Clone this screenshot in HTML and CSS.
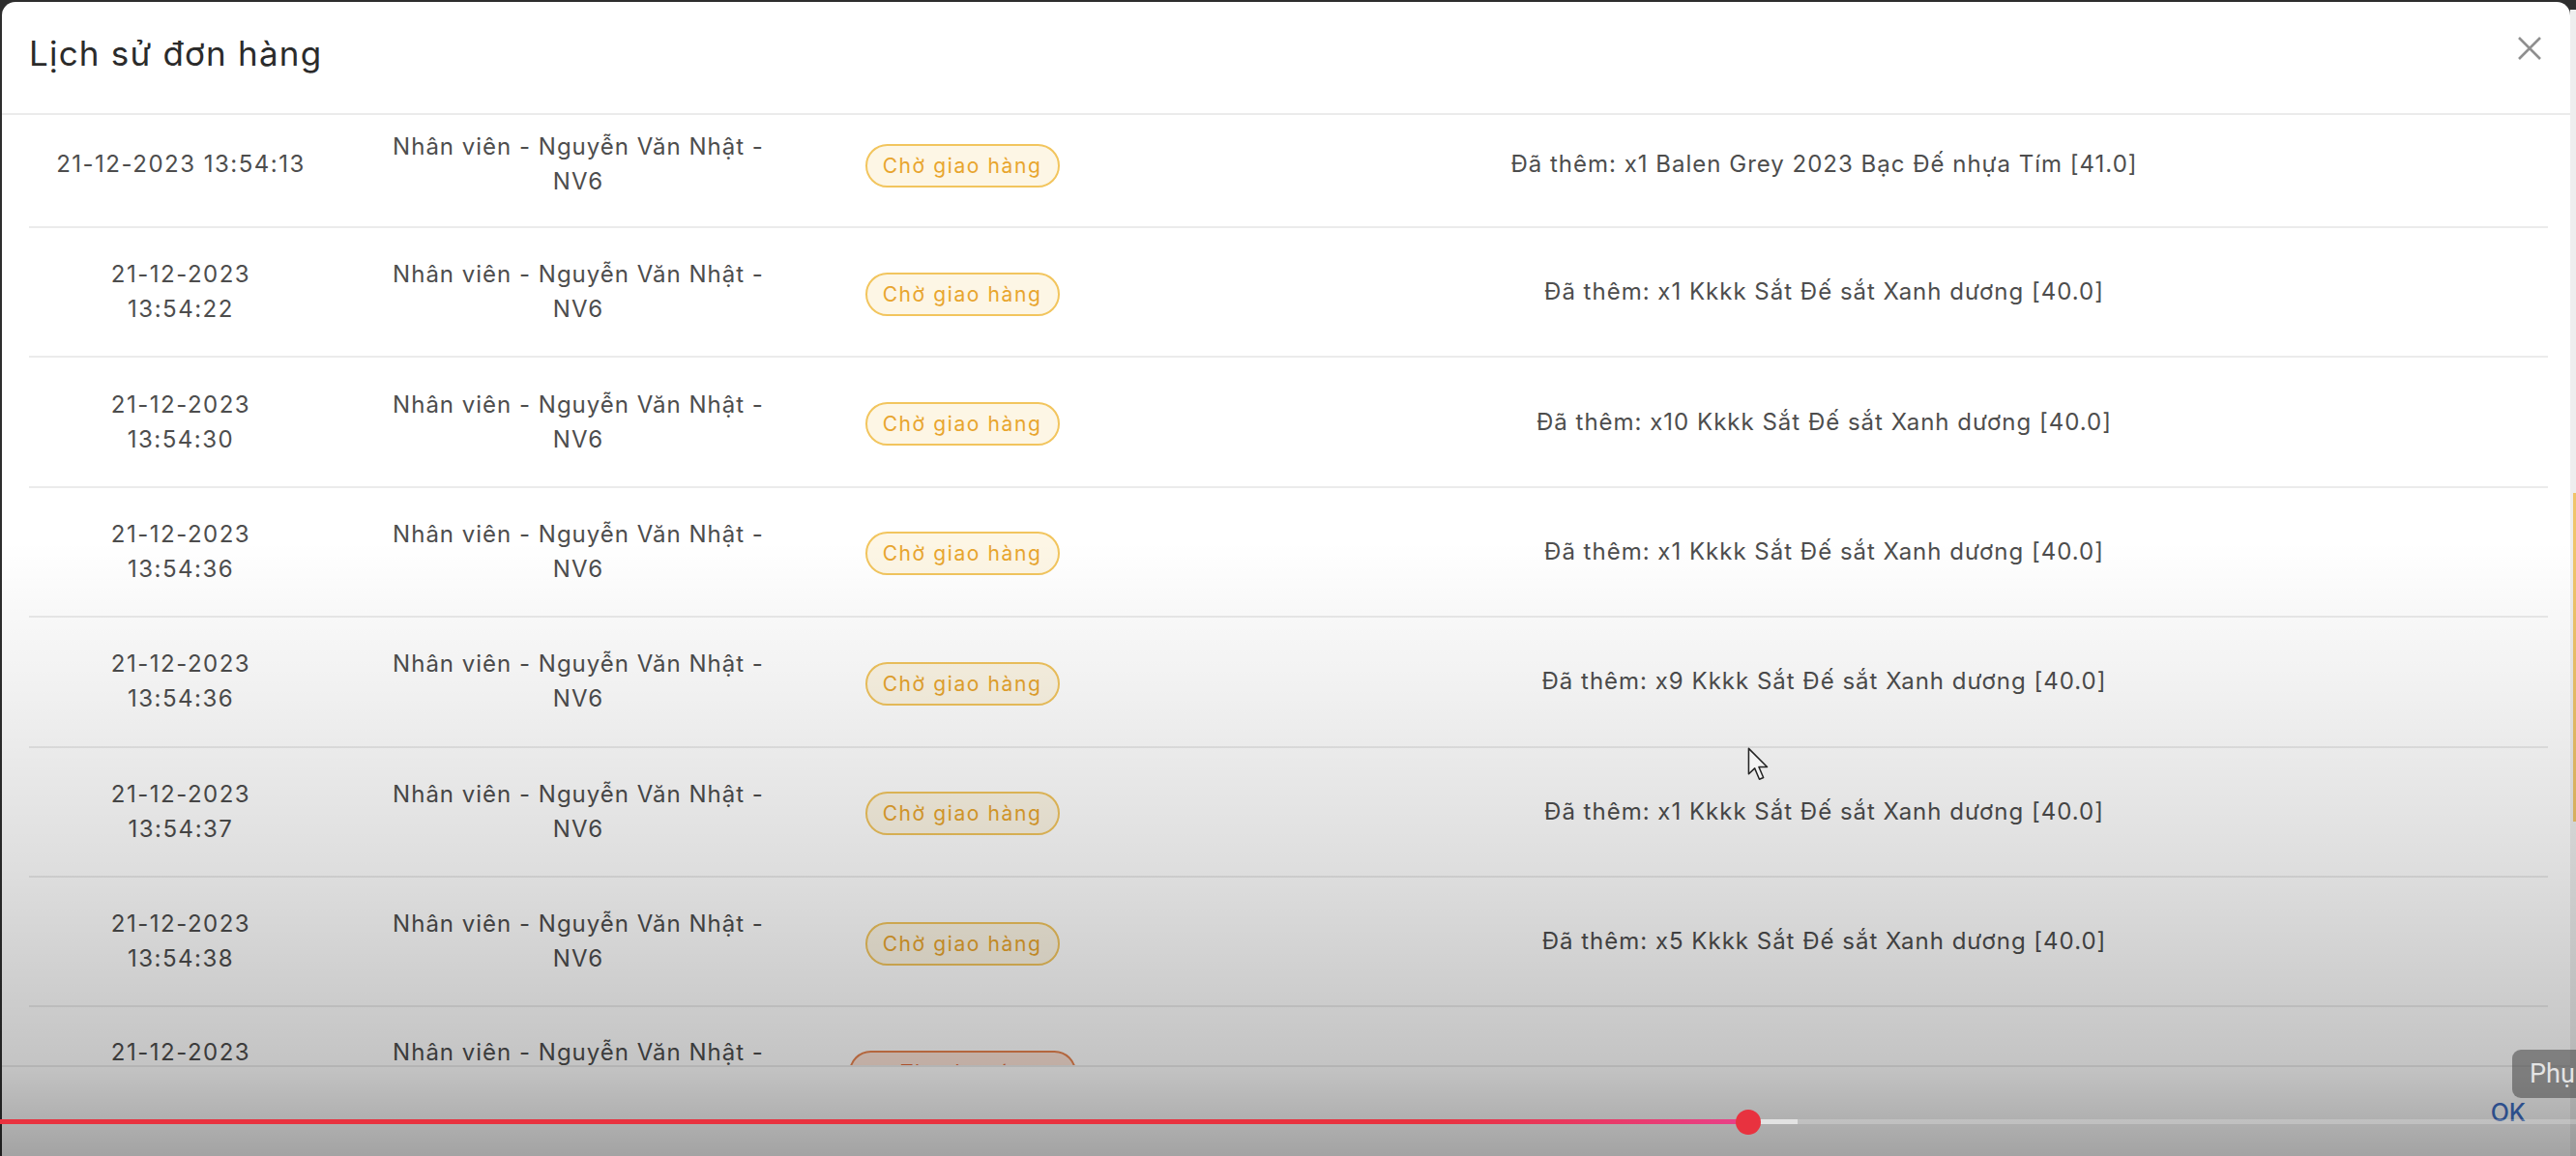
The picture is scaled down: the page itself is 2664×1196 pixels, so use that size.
FILE: index.html
```html
<!DOCTYPE html>
<html lang="vi">
<head>
<meta charset="utf-8">
<title>Lịch sử đơn hàng</title>
<link rel="stylesheet" href="styles.css">
</head>
<body>
<div class="edge-left"></div>
<div class="modal">
  <div class="modal-header">
    <div class="modal-title">Lịch sử đơn hàng</div>
    <svg class="close" viewBox="0 0 26 26" width="26" height="26"><path d="M2 2 L24 24 M24 2 L2 24" stroke="#8f8f8f" stroke-width="2.6" fill="none"/></svg>
  </div>
  <div class="modal-body">
    <div class="list">
      <div class="row first">
        <div class="cell date">21-12-2023 13:54:13</div>
        <div class="cell">Nhân viên - Nguyễn Văn Nhật -<br>NV6</div>
        <div class="cell"><span class="tag">Chờ giao hàng</span></div>
        <div class="cell">Đã thêm: x1 Balen Grey 2023 Bạc Đế nhựa Tím [41.0]</div>
      </div>
      <div class="row">
        <div class="cell date">21-12-2023<br>13:54:22</div>
        <div class="cell">Nhân viên - Nguyễn Văn Nhật -<br>NV6</div>
        <div class="cell"><span class="tag">Chờ giao hàng</span></div>
        <div class="cell">Đã thêm: x1 Kkkk Sắt Đế sắt Xanh dương [40.0]</div>
      </div>
      <div class="row">
        <div class="cell date">21-12-2023<br>13:54:30</div>
        <div class="cell">Nhân viên - Nguyễn Văn Nhật -<br>NV6</div>
        <div class="cell"><span class="tag">Chờ giao hàng</span></div>
        <div class="cell">Đã thêm: x10 Kkkk Sắt Đế sắt Xanh dương [40.0]</div>
      </div>
      <div class="row">
        <div class="cell date">21-12-2023<br>13:54:36</div>
        <div class="cell">Nhân viên - Nguyễn Văn Nhật -<br>NV6</div>
        <div class="cell"><span class="tag">Chờ giao hàng</span></div>
        <div class="cell">Đã thêm: x1 Kkkk Sắt Đế sắt Xanh dương [40.0]</div>
      </div>
      <div class="row">
        <div class="cell date">21-12-2023<br>13:54:36</div>
        <div class="cell">Nhân viên - Nguyễn Văn Nhật -<br>NV6</div>
        <div class="cell"><span class="tag">Chờ giao hàng</span></div>
        <div class="cell">Đã thêm: x9 Kkkk Sắt Đế sắt Xanh dương [40.0]</div>
      </div>
      <div class="row">
        <div class="cell date">21-12-2023<br>13:54:37</div>
        <div class="cell">Nhân viên - Nguyễn Văn Nhật -<br>NV6</div>
        <div class="cell"><span class="tag">Chờ giao hàng</span></div>
        <div class="cell">Đã thêm: x1 Kkkk Sắt Đế sắt Xanh dương [40.0]</div>
      </div>
      <div class="row">
        <div class="cell date">21-12-2023<br>13:54:38</div>
        <div class="cell">Nhân viên - Nguyễn Văn Nhật -<br>NV6</div>
        <div class="cell"><span class="tag">Chờ giao hàng</span></div>
        <div class="cell">Đã thêm: x5 Kkkk Sắt Đế sắt Xanh dương [40.0]</div>
      </div>
      <div class="row last">
        <div class="cell date">21-12-2023</div>
        <div class="cell">Nhân viên - Nguyễn Văn Nhật -</div>
        <div class="cell"><span class="tag tag-red">Thanh toán</span></div>
        <div class="cell"></div>
      </div>
    </div>
  </div>
  <div class="modal-footer">
    <span class="ok">OK</span>
  </div>
</div>
<div class="edge-right"><div class="edge-thumb"></div></div>

<div class="shade"></div>
<svg class="cursor" viewBox="0 0 18 26" width="25" height="36"><path d="M1 1 L1 20 L5.5 15.8 L9 24 L12 22.8 L8.6 14.8 L14.8 14.8 Z" fill="#f4f4f4" stroke="#222" stroke-width="1.1" stroke-linejoin="round"/></svg>
<div class="tooltip">Phụ</div>
<div class="progress">
  <div class="played"></div>
  <div class="buffered"></div>
  <div class="scrubber"></div>
</div>
</body>
</html>
```
FILE: styles.css
```css
html, body {
  margin: 0;
  padding: 0;
}
body {
  width: 2664px;
  height: 1196px;
  overflow: hidden;
  background: #2e2e2e;
  display: flex;
  font-family: "Inter", "Roboto", "Noto Sans", sans-serif;
  position: relative;
}
.edge-left {
  width: 2px;
  flex: none;
}
.modal {
  width: 2656px;
  flex: none;
  margin-top: 2px;
  height: 1194px;
  background: #fff;
  border-radius: 14px 14px 0 0;
  display: flex;
  flex-direction: column;
  overflow: hidden;
}
.edge-right {
  flex: 1;
  background: #eeeeee;
  margin-top: 10px;
  display: flex;
  justify-content: flex-end;
}
.edge-thumb {
  width: 3px;
  height: 340px;
  margin-top: 500px;
  background: #f0c46a;
}
.modal-header {
  height: 115px;
  flex: none;
  border-bottom: 2px solid #ebebeb;
  display: flex;
  justify-content: space-between;
  align-items: flex-start;
  padding: 0 29px 0 28px;
}
.modal-title {
  font-size: 35px;
  line-height: 44px;
  margin-top: 31px;
  color: #2b2b2b;
  font-weight: 400;
  letter-spacing: 1.2px;
}
.close {
  margin-top: 35px;
}
.modal-body {
  flex: 1;
  overflow: hidden;
}
.list {
  margin: -14px 23px 0 28px;
}
.row {
  display: grid;
  grid-template-columns: 314px 508px 286px 1fr;
  align-items: center;
  height: 134.4px;
  box-sizing: border-box;
  border-bottom: 2px solid #ebebeb;
  text-align: center;
  font-size: 24px;
  line-height: 36px;
  letter-spacing: 1px;
  color: #4d4d4d;
}
.row.first {
  height: 131px;
}
.row.last {
  align-items: start;
  padding-top: 29px;
}
.cell {
  padding: 0 10px;
}
.cell.date {
  letter-spacing: 1.5px;
}
.tag {
  display: inline-block;
  box-sizing: border-box;
  width: 201px;
  height: 45px;
  line-height: 41px;
  border: 2px solid #f2c55e;
  border-radius: 23px;
  background: #fdf6e5;
  color: #e8a52e;
  font-size: 21px;
  letter-spacing: 1.6px;
  white-space: nowrap;
  margin-top: 4px;
}
.tag.tag-red {
  width: 235px;
  border-color: #e88450;
  background: #fbe2d6;
  color: #e06a3a;
  margin-top: 16px;
}
.modal-footer {
  height: 92px;
  flex: none;
  border-top: 2px solid #ebebeb;
  display: flex;
  justify-content: flex-end;
  align-items: flex-start;
  padding-right: 46px;
}
.ok {
  margin-top: 32px;
  font-size: 25px;
  line-height: 30px;
  font-weight: 500;
  color: #3f6fc6;
}
.shade {
  position: absolute;
  left: 0;
  right: 0;
  top: 560px;
  bottom: 0;
  background: linear-gradient(to bottom,
    rgba(0,0,0,0) 0%,
    rgba(0,0,0,0.05) 22%,
    rgba(0,0,0,0.13) 53%,
    rgba(0,0,0,0.23) 85%,
    rgba(0,0,0,0.36) 100%);
  pointer-events: none;
}
.cursor {
  position: absolute;
  left: 1807px;
  top: 773px;
}
.tooltip {
  position: absolute;
  left: 2598px;
  top: 1086px;
  width: 90px;
  height: 50px;
  box-sizing: border-box;
  border-radius: 9px;
  background: rgba(70,70,70,0.55);
  color: #e4e4e4;
  font-size: 27px;
  line-height: 50px;
  padding-left: 18px;
  font-family: "Roboto", "Noto Sans", sans-serif;
}
.progress {
  position: absolute;
  left: 0;
  right: 0;
  top: 1158px;
  height: 5px;
  background: rgba(255,255,255,0.22);
}
.played {
  position: absolute;
  left: 0;
  top: 0;
  height: 5px;
  width: 1808px;
  background: linear-gradient(to right, #e8323f 0%, #e8323f 82%, #e8418a 100%);
}
.buffered {
  position: absolute;
  left: 1808px;
  top: 0;
  height: 5px;
  width: 51px;
  background: rgba(255,255,255,0.55);
}
.scrubber {
  position: absolute;
  left: 1795px;
  top: -10px;
  width: 26px;
  height: 26px;
  border-radius: 50%;
  background: #e8323f;
}
```
